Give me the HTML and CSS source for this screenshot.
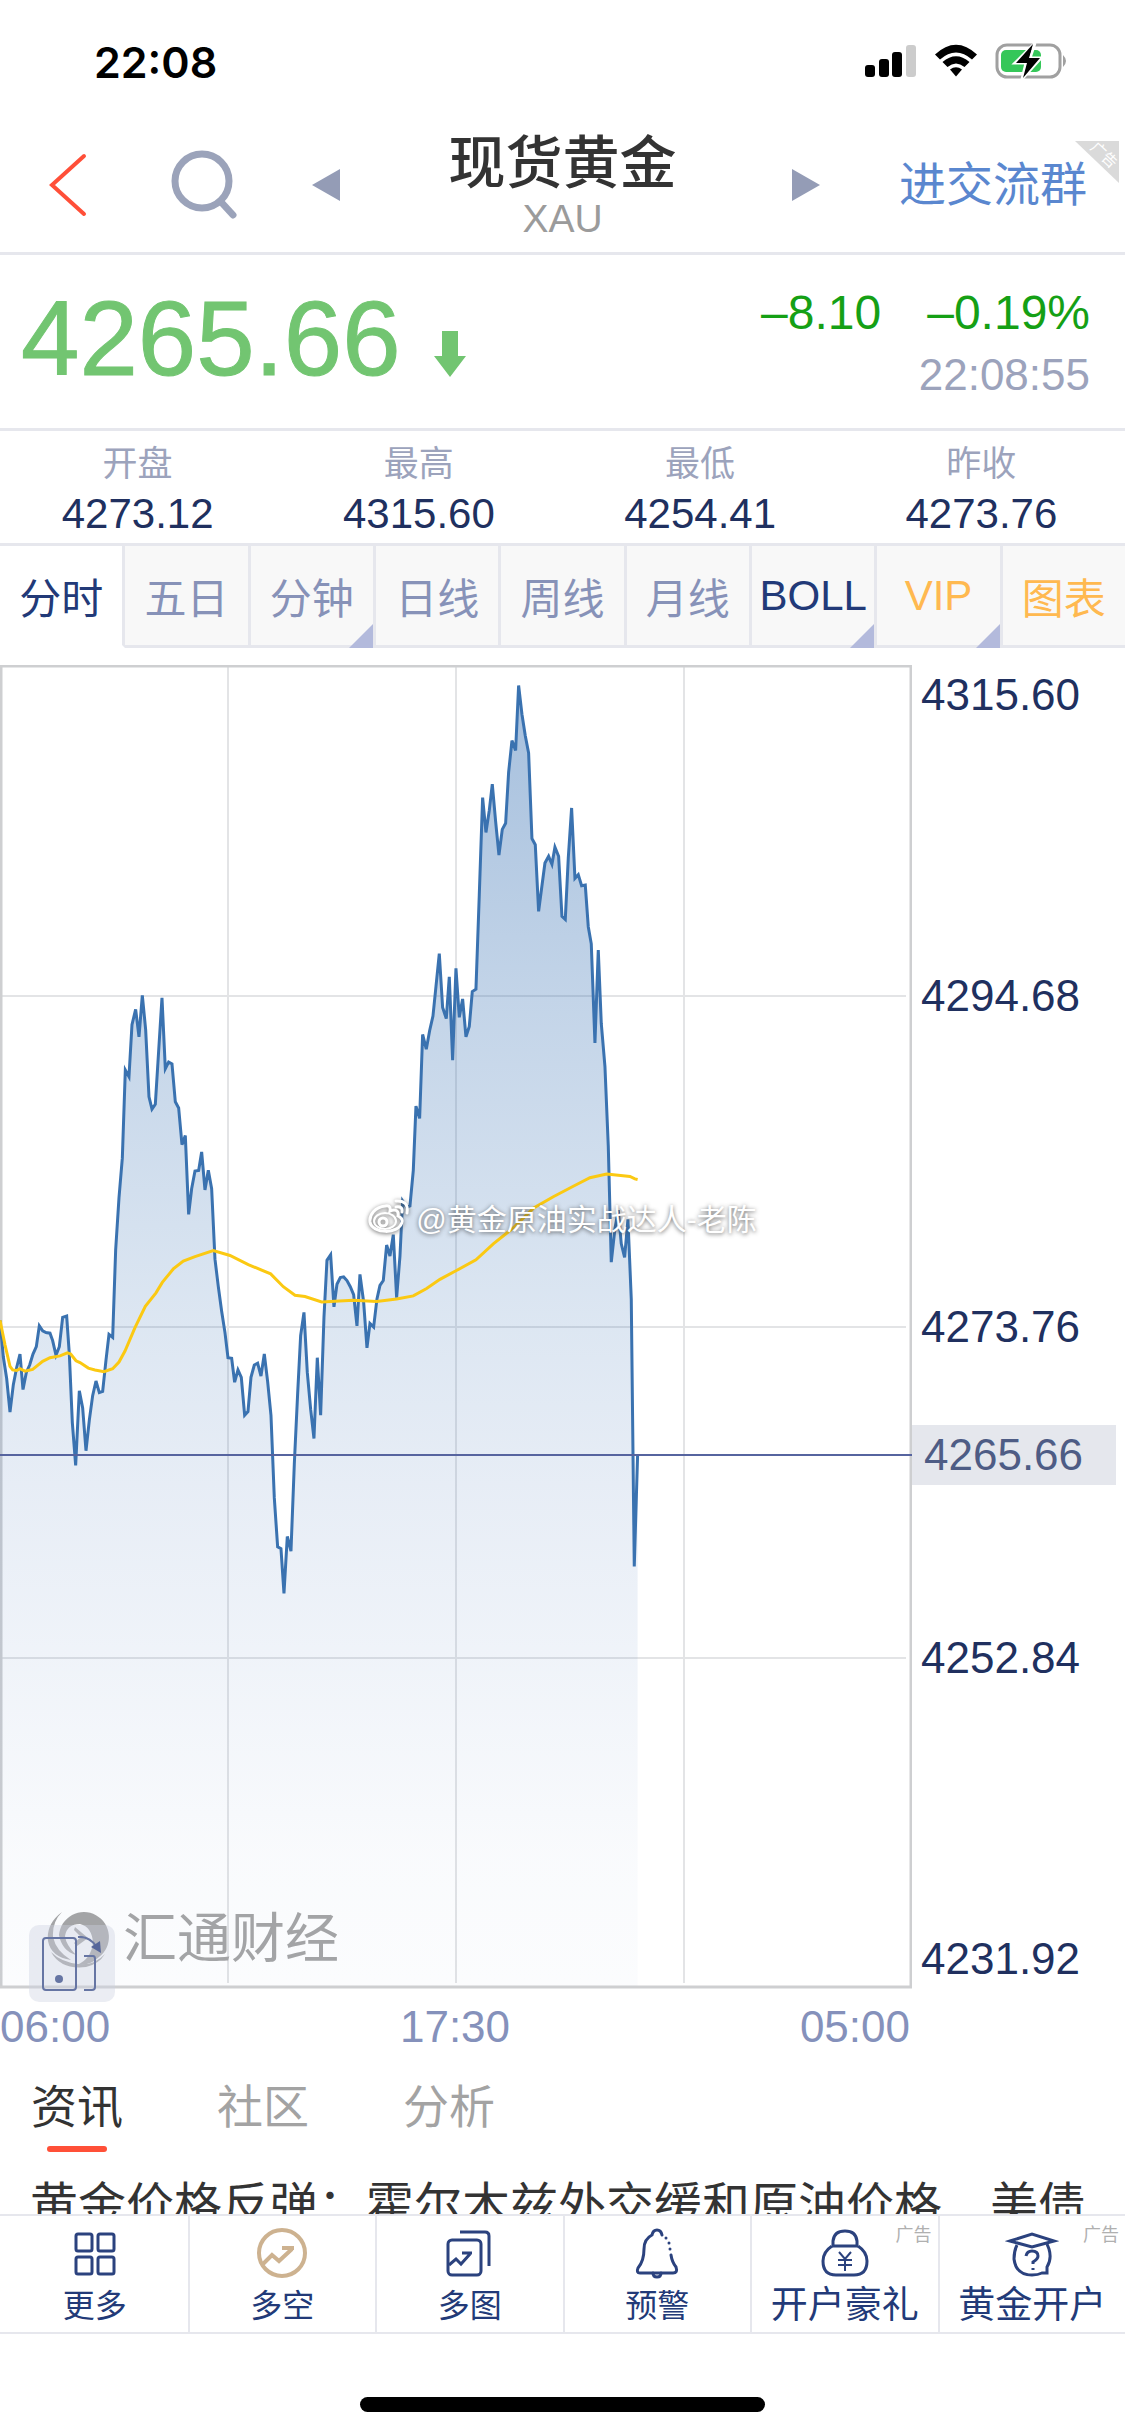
FILE: index.html
```html
<!DOCTYPE html>
<html lang="zh-CN">
<head>
    <meta charset="UTF-8">
    <meta name="viewport" content="width=device-width, initial-scale=1.0">
    <title>现货黄金 XAU</title>
    <link rel="stylesheet" href="styles.css">
</head>
<body>
    <div class="status-bar">
        <span class="clock">22:08</span>
        <div class="status-icons">
            <svg width="52" height="34" viewBox="0 0 52 34">
                <rect x="0" y="21" width="10" height="12" rx="3"/>
                <rect x="14" y="15" width="10" height="18" rx="3"/>
                <rect x="27" y="8" width="10" height="25" rx="3"/>
                <rect x="41" y="1" width="10" height="32" rx="3" fill="#cccccc"/>
            </svg>
            <svg width="44" height="34" viewBox="0 0 44 34">
                <path d="M1 10.500 Q22 -9 43 10.500 L38 15.500 Q22 1.500 6 15.500 Z"/>
                <path d="M8.500 18 Q22 6.500 35.500 18 L30.500 23 Q22 16 13.500 23 Z"/>
                <path d="M16 25.500 Q22 21 28 25.500 L22 32.500 Z"/>
            </svg>
            <svg width="74" height="38" viewBox="0 0 74 38">
                <rect x="2" y="3" width="63" height="32" rx="10" fill="none" stroke="#a0a0a0" stroke-width="3"/>
                <path d="M68 13 Q74 19 68 25 Z" fill="#a0a0a0"/>
                <rect x="6" y="8" width="40" height="22" rx="5" fill="#35c759"/>
                <path d="M40 1 L20 21 L31 21 L27 37 L46 16 L35 16 Z" stroke="#ffffff" stroke-width="3"/>
                <path d="M38 2 L21 21 L32 21 L28 36 L45 16 L34 16 Z"/>
            </svg>
        </div>
    </div>

    <header class="header">
        <div class="header-left">
            <button class="icon-btn" aria-label="返回">
                <svg width="45" height="64" viewBox="0 0 45 64" fill="none" stroke="#ff4f38" stroke-width="4" stroke-linecap="round">
                    <path d="M35 3 L3 32 L35 61"/>
                </svg>
            </button>
            <button class="icon-btn" aria-label="搜索">
                <svg width="68" height="70" viewBox="0 0 68 70" fill="none" stroke="#9ba3ba" stroke-width="7" stroke-linecap="round">
                    <circle cx="33" cy="31" r="27"/>
                    <path d="M53 53 L64 65"/>
                </svg>
            </button>
            <button class="icon-btn" aria-label="上一个">
                <svg width="28" height="32" viewBox="0 0 28 32" fill="#949cb6"><path d="M28 0 V32 L0 16 Z"/></svg>
            </button>
        </div>
        <div class="title">
            <h1>现货黄金</h1>
            <span>XAU</span>
        </div>
        <div class="header-right">
            <button class="icon-btn" aria-label="下一个">
                <svg width="28" height="32" viewBox="0 0 28 32" fill="#949cb6"><path d="M0 0 V32 L28 16 Z"/></svg>
            </button>
            <a class="group-link" href="#">进交流群</a>
        </div>
        <svg class="ribbon" width="44" height="42" viewBox="0 0 44 42">
            <path d="M0 0 H44 V42 Z" fill="#dadada"/>
            <text x="29" y="19" transform="rotate(43 29 14)">广告</text>
        </svg>
    </header>

    <section class="quote">
        <div class="price">
            <strong>4265.66</strong>
            <svg width="32" height="46" viewBox="0 0 32 46" fill="#72c571"><path d="M8 0 H24 V25 H32 L16 46 L0 25 H8 Z"/></svg>
        </div>
        <div class="change">
            <div class="change-values"><span>–8.10</span><span>–0.19%</span></div>
            <time>22:08:55</time>
        </div>
    </section>

    <dl class="stats">
        <div><dt>开盘</dt><dd>4273.12</dd></div>
        <div><dt>最高</dt><dd>4315.60</dd></div>
        <div><dt>最低</dt><dd>4254.41</dd></div>
        <div><dt>昨收</dt><dd>4273.76</dd></div>
    </dl>

    <nav class="periods">
        <button class="active">分时</button>
        <button>五日</button>
        <button class="has-menu">分钟</button>
        <button>日线</button>
        <button>周线</button>
        <button>月线</button>
        <button class="dark has-menu">BOLL</button>
        <button class="gold has-menu">VIP</button>
        <button class="gold">图表</button>
    </nav>

    <main class="content">
        <section class="chart">
            <div class="plot">
                <svg class="plot-svg" viewBox="0 0 912 1324">
                    <defs>
                        <linearGradient id="area-fill" x1="0" y1="0" x2="0" y2="1">
                            <stop offset="0" stop-color="#2f6bb0" stop-opacity="0.43"/>
                            <stop offset="0.24" stop-color="#2f6bb0" stop-opacity="0.29"/>
                            <stop offset="0.49" stop-color="#2f6bb0" stop-opacity="0.165"/>
                            <stop offset="0.62" stop-color="#3a6cb4" stop-opacity="0.12"/>
                            <stop offset="0.9" stop-color="#3a6cb4" stop-opacity="0.03"/>
                            <stop offset="1" stop-color="#3a6cb4" stop-opacity="0.02"/>
                        </linearGradient>
                    </defs>
                    <!-- grid -->
                    <g stroke="#e3e4e6" stroke-width="2">
                        <path d="M228 2 V1318 M456 2 V1318 M684 2 V1318"/>
                        <path d="M2 331 H906 M2 662 H906 M2 993 H906"/>
                    </g>
                    <rect x="1" y="1" width="910" height="1321" fill="none" stroke="#cecfd1" stroke-width="3"/>
                    <!-- price line, area is closed by the script below -->
                    <polygon id="area" fill="url(#area-fill)" transform="translate(0 -15) scale(0.3333 0.6122)"/>
                    <polyline id="price" class="line price-line" transform="translate(0 -15) scale(0.3333 0.6122)" points="
                        0,1095 10,1155 20,1190 30,1245 40,1200 50,1172 60,1150 69,1208 79,1180 89,1168 99,1150 109,1138
                        118,1104 128,1112 138,1115 150,1116 158,1128 168,1152 178,1138 188,1090 200,1088 208,1150 217,1262 227,1332
                        238,1210 248,1238 258,1308 268,1258 278,1218 288,1194 298,1213 308,1211 318,1160 327,1118 338,1123 347,980
                        357,895 367,830 376,686 387,697 396,612 407,587 417,632 427,564 437,620 447,730 456,750 466,742
                        476,655 486,568 496,684 506,673 516,676 526,738 536,748 546,808 556,793 566,922 575,880 585,851
                        596,850 605,820 615,882 625,850 635,880 645,995 655,1040 665,1080 675,1115 684,1156 695,1157 704,1196
                        714,1176 724,1188 734,1250 744,1244 753,1188 763,1168 773,1165 783,1186 793,1150 803,1195 813,1250 823,1385
                        833,1465 843,1468 852,1541 862,1448 873,1472 883,1330 893,1215 902,1120 912,1082 922,1180 932,1240 942,1288
                        952,1156 962,1250 972,1090 981,997 992,988 1002,1073 1011,1036 1021,1025 1031,1024 1041,1030 1051,1040 1061,1053
                        1071,1104 1080,1020 1091,1065 1101,1140 1110,1100 1121,1106 1131,1060 1140,1038 1150,1030 1160,972 1170,990 1180,955
                        1190,1058 1200,990 1208,900 1220,910 1230,908 1240,850 1248,745 1259,765 1268,628 1279,652 1289,622 1299,598
                        1308,550 1318,496 1328,584 1339,602 1348,534 1358,670 1368,520 1378,600 1388,570 1398,632 1408,615 1417,558
                        1428,554 1438,400 1448,241 1458,298 1468,262 1477,219 1487,280 1497,335 1507,293 1517,283 1526,200 1536,148
                        1547,164 1556,58 1566,105 1576,140 1586,168 1596,308 1606,318 1616,427 1626,385 1635,348 1646,337 1656,350
                        1665,322 1676,337 1686,435 1696,440 1705,340 1715,258 1725,373 1735,367 1745,385 1756,384 1765,452 1774,480
                        1785,642 1795,490 1804,610 1815,680 1825,810 1834,1000 1845,945 1855,915 1864,970 1874,992 1884,930 1894,1060
                        1903,1497 1913,1315"/>
                    <!-- average line -->
                    <polyline class="line average-line" transform="translate(0 -15) scale(0.3333 0.6122)" points="
                        0,1095 15,1135 30,1170 38,1176 50,1177 60,1174 75,1178 98,1175 128,1162 150,1156 180,1153 202,1148
                        212,1150 228,1161 240,1164 265,1173 285,1176 312,1179 338,1174 357,1163 375,1145 405,1107 436,1072 468,1050
                        487,1033 520,1011 550,998 585,991 640,981 690,989 745,1004 812,1019 850,1040 885,1054 915,1056 965,1065
                        1060,1062 1130,1064 1190,1060 1240,1055 1280,1043 1320,1028 1368,1014 1428,996 1480,970 1540,944 1600,912 1660,893
                        1720,876 1770,862 1820,856 1890,860 1905,864 1913,865"/>
                    <path d="M0 790 H912" stroke="#56649f" stroke-width="2"/>
                </svg>
                <div class="brand">
                    <svg width="64" height="64" viewBox="0 0 64 64" fill="#a3a4a6">
                        <path fill-rule="evenodd" d="M12 28 A25 25 0 1 1 52 50 Q43 59 30 58 Q44 52 46 36 Q45 20 33 17 Q20 17 18 29 Q19 38 29 48 Q15 44 12 28 Z"/>
                        <path d="M15 5 Q-1 17 1 34 Q4 50 24 53 Q9 44 6 30 Q5 15 15 5 Z"/>
                        <path d="M4 45 Q14 63 39 60 Q52 57 58 47 Q47 59 31 57 Q14 55 4 45 Z"/>
                        <path d="M28 20 L41 31 L30 39 L27 36 L34 30 L27 23 Z"/>
                    </svg>
                    <span>汇通财经</span>
                </div>
                <button class="rotate-btn" aria-label="横屏">
                    <svg width="62" height="56" viewBox="0 0 62 56" fill="none" stroke="#6675a3" stroke-width="2">
                        <rect x="2" y="2" width="33" height="52" rx="3"/>
                        <circle cx="18" cy="43" r="4" fill="#6675a3" stroke="none"/>
                        <path d="M43 20 H52 Q54 20 54 23 V51 Q54 54 51 54 H43"/>
                        <path d="M37 1 Q48 0 55 10"/>
                        <path d="M50 11 L59 5 L60 17 Z" fill="#56669a" stroke="none"/>
                    </svg>
                </button>
            </div>
            <div class="y-axis">
                <span>4315.60</span>
                <span>4294.68</span>
                <span>4273.76</span>
                <span>4252.84</span>
                <span>4231.92</span>
                <span class="last-price" style="top: 59.7%">4265.66</span>
            </div>
            <div class="watermark">
                <svg width="42" height="36" viewBox="0 0 42 36" fill="none" stroke="#ffffff" stroke-width="3">
                    <path d="M17 8 C7 9 1 17 2 24 C4 36 31 37 34 24 C35 20 32 19 30 18 C31 12 27 11 22 13 C23 8 20 7 17 8 Z"/>
                    <ellipse cx="17" cy="23" rx="11" ry="8" stroke-width="2"/>
                    <circle cx="15" cy="24" r="4" stroke-width="3"/>
                    <path d="M28 3 Q41 2 39 15 M28 9 Q35 8 34 14" stroke-linecap="round"/>
                </svg>
                <span>@黄金原油实战达人-老陈</span>
            </div>
        </section>
        <div class="x-axis"><span>06:00</span><span>17:30</span><span>05:00</span></div>

        <div class="feed-tabs">
            <button class="active">资讯</button>
            <button>社区</button>
            <button>分析</button>
        </div>
        <a class="news" href="#">黄金价格反弹：霍尔木兹外交缓和原油价格　美债</a>
    </main>

    <nav class="toolbar">
        <a href="#">
            <svg width="54" height="54" viewBox="0 0 54 54" stroke-width="3">
                <rect x="8" y="8" width="16" height="17" rx="2"/>
                <rect x="30" y="8" width="16" height="17" rx="2"/>
                <rect x="8" y="31" width="16" height="17" rx="2"/>
                <rect x="30" y="31" width="16" height="17" rx="2"/>
            </svg>
            <span>更多</span>
        </a>
        <a class="tan" href="#">
            <svg width="54" height="54" viewBox="0 0 54 54" stroke-width="4">
                <circle cx="27" cy="27" r="23"/>
                <path d="M8 38 L17 29 L24 35 L37 23 M27 22 H39"/>
            </svg>
            <span>多空</span>
        </a>
        <a href="#">
            <svg width="54" height="54" viewBox="0 0 54 54" stroke-width="3">
                <rect x="5" y="14" width="33" height="35" rx="4"/>
                <path d="M17 6 H42 Q46 6 46 10 V40"/>
                <path d="M6 39 L13 33 L18 38 L27 28 M19 27 H29"/>
            </svg>
            <span>多图</span>
        </a>
        <a href="#">
            <svg width="54" height="54" viewBox="0 0 54 54" stroke-width="3" stroke-linecap="round">
                <path d="M32 9 Q31 4 27 4 Q23 4 22 9 Q14 13 14 23 Q14 35 8 42 Q6 47 10 47 H43 Q48 47 46 41 Q42 36 41 29"/>
                <path d="M36 12 V12 M39 17 V17 M40 23 V23"/>
                <path d="M23 47 Q23 51 27 51 Q31 51 31 47"/>
            </svg>
            <span>预警</span>
        </a>
        <a class="promo" href="#">
            <svg width="54" height="54" viewBox="0 0 54 54" stroke-width="3">
                <path d="M15 19 V15 Q16 5 27 5 Q38 5 39 15 V19 M14 20 H40"/>
                <path d="M14 20 Q5 26 5 35 Q5 49 18 49 H36 Q49 49 49 35 Q49 26 40 20"/>
                <path d="M21 26 L27 33 L33 26 M27 33 V45 M20 34 H34 M20 39 H34" stroke-width="2"/>
            </svg>
            <span>开户豪礼</span>
            <small>广告</small>
        </a>
        <a class="promo" href="#">
            <svg width="54" height="54" viewBox="0 0 54 54" stroke-width="3">
                <path d="M5 15 L27 8 L49 15 L27 21 Z"/>
                <path d="M12 19 Q9 25 9 33 Q11 49 27 49 Q33 49 37 47 H42 V41 Q47 33 44 23 L42 18"/>
                <path d="M21 30 Q22 25 27 25 Q33 25 33 30 Q33 33 28 36 V38 M28 42 V44"/>
            </svg>
            <span>黄金开户</span>
            <small>广告</small>
        </a>
    </nav>
    <div class="home-area"><div class="home-indicator"></div></div>

    <script>
        // close the price line down to the bottom of the plot
        const points = document.getElementById("price").getAttribute("points").trim();
        document.getElementById("area").setAttribute("points", "0,2182 " + points + " 1913,2182");
    </script>
</body>
</html>
```
FILE: styles.css
```css
* {
    box-sizing: border-box;
}

body {
    margin: 0;
    height: 100vh;
    display: flex;
    flex-direction: column;
    overflow: hidden;
    background-color: #ffffff;
    font-family: "Liberation Sans", "Noto Sans CJK SC", sans-serif;
    color: #20305f;
}

button {
    border: 0;
    padding: 0;
    background: none;
    font: inherit;
    color: inherit;
}

a {
    color: inherit;
    text-decoration: none;
}

svg {
    display: block;
}

/* Status bar */
.status-bar {
    flex: none;
    height: 108px;
    padding: 14px 56px 0 94px;
    display: flex;
    justify-content: space-between;
    color: #000000;
}

.clock {
    font-family: "Inter", sans-serif;
    font-size: 43px;
    font-weight: 600;
    line-height: 96px;
}

.status-icons {
    display: flex;
    align-items: center;
    gap: 17px;
    height: 94px;
}

/* Header */
.header {
    flex: none;
    position: relative;
    height: 147px;
    padding-top: 10px;
    display: grid;
    grid-template-columns: 1fr auto 1fr;
    align-items: center;
    border-bottom: 3px solid #e6e7ed;
}

.header-left {
    display: flex;
    align-items: center;
    gap: 75px;
    padding-left: 49px;
}

.header-right {
    display: flex;
    align-items: center;
    justify-content: space-between;
    padding: 0 38px 0 115px;
}

.title {
    text-align: center;
}

.title h1 {
    margin: 0;
    font-size: 57px;
    font-weight: 500;
    line-height: 68px;
    color: #333333;
}

.title span {
    display: block;
    font-size: 39px;
    line-height: 44px;
    color: #9b9b9b;
}

.group-link {
    font-size: 47px;
    line-height: 60px;
    color: #5a87cf;
}

.ribbon {
    position: absolute;
    top: 33px;
    right: 6px;
}

.ribbon text {
    font-size: 15px;
    text-anchor: middle;
    fill: #ffffff;
}

/* Quote */
.quote {
    flex: none;
    height: 176px;
    padding: 0 35px 0 21px;
    display: flex;
    justify-content: space-between;
    border-bottom: 3px solid #e6e7ed;
}

.price {
    display: flex;
    align-items: flex-end;
    gap: 33px;
    padding-bottom: 51px;
}

.price strong {
    font-size: 105px;
    font-weight: 400;
    line-height: 76px;
    color: #72c571;
    -webkit-text-stroke: 1px #72c571;
}

.change {
    padding-top: 28px;
    text-align: right;
}

.change-values {
    display: flex;
    gap: 46px;
    font-size: 48px;
    line-height: 60px;
    color: #15a015;
}

.change time {
    display: block;
    margin-top: 2px;
    font-size: 44px;
    line-height: 60px;
    color: #9ca3bc;
}

/* Open, high, low, close */
.stats {
    flex: none;
    height: 115px;
    margin: 0 0 0 -3px;
    padding: 11px 3px 0 0;
    display: flex;
    border-bottom: 3px solid #e6e7ed;
    text-align: center;
}

.stats div {
    flex: 1;
}

.stats dt {
    font-size: 35px;
    line-height: 44px;
    color: #9ca3bc;
}

.stats dd {
    margin: 4px 0 0;
    font-size: 42px;
    line-height: 48px;
}

/* Period tabs */
.periods {
    flex: none;
    height: 102px;
    margin-right: -3px;
    display: grid;
    grid-template-columns: repeat(9, 1fr);
}

.periods button {
    position: relative;
    border-right: 3px solid #e6e7ed;
    border-bottom: 3px solid #e6e7ed;
    background-color: #f8f8f8;
    font-size: 42px;
    color: #8792b8;
}

.periods .active {
    border-bottom-color: #ffffff;
    background-color: #ffffff;
    color: #223a78;
}

.periods .dark {
    color: #223a78;
}

.periods .gold {
    color: #ffb950;
}

.has-menu::after {
    content: "";
    position: absolute;
    right: 0;
    bottom: -3px;
    border-left: 24px solid transparent;
    border-bottom: 24px solid #b3badc;
}

/* Chart */
.content {
    flex: 1;
    min-height: 0;
    overflow: hidden;
    padding-top: 17px;
}

.chart {
    position: relative;
    display: grid;
    grid-template-columns: 1fr 213px;
}

.plot {
    position: relative;
}

.plot-svg {
    width: 100%;
    height: auto;
}

.line {
    fill: none;
    stroke-width: 3px;
    vector-effect: non-scaling-stroke;
}

.price-line {
    stroke: #3a72b0;
}

.average-line {
    stroke: #fbc912;
}

.brand {
    position: absolute;
    left: 47px;
    bottom: 13px;
    display: flex;
    align-items: center;
    gap: 12px;
    font-size: 54px;
    line-height: 74px;
    color: #a3a4a6;
}

.rotate-btn {
    position: absolute;
    left: 29px;
    bottom: -13px;
    padding: 11px 12px 10px;
    border-radius: 10px;
    background-color: rgba(205, 209, 226, 0.4);
}

.y-axis {
    position: relative;
    display: grid;
    grid-template-rows: 1fr 2fr 2fr 2fr 1fr;
    align-items: center;
    padding-left: 9px;
    font-size: 44px;
    line-height: 60px;
}

.y-axis span:first-child {
    align-self: start;
}

.y-axis span:nth-child(5) {
    align-self: end;
}

.last-price {
    position: absolute;
    left: 0;
    right: 9px;
    padding-left: 12px;
    background-color: #e5e7ed;
    color: #4e5c85;
    transform: translateY(-50%);
}

.watermark {
    position: absolute;
    top: 533px;
    left: 0;
    right: 0;
    display: flex;
    justify-content: center;
    gap: 6px;
    font-size: 30px;
    line-height: 44px;
    color: #ffffff;
    text-shadow: 0 1px 4px rgba(60, 60, 60, 0.8);
}

.watermark svg {
    filter: drop-shadow(0 1px 2px rgba(60, 60, 60, 0.7));
}

.x-axis {
    display: flex;
    justify-content: space-between;
    padding: 8px 215px 0 0;
    font-size: 44px;
    line-height: 60px;
    color: #8591bb;
}

/* News */
.feed-tabs {
    display: flex;
    gap: 94px;
    padding: 20px 31px 0;
    font-size: 46px;
    line-height: 60px;
    color: #a3a3a3;
}

.feed-tabs button {
    padding-bottom: 15px;
    position: relative;
}

.feed-tabs .active {
    color: #333333;
}

.feed-tabs .active::after {
    content: "";
    position: absolute;
    left: 16px;
    right: 16px;
    bottom: 0;
    height: 6px;
    border-radius: 3px;
    background-color: #ff5038;
}

.news {
    display: block;
    margin-top: 20px;
    padding: 0 30px;
    font-size: 48px;
    line-height: 68px;
    white-space: nowrap;
    color: #333333;
}

/* Bottom toolbar */
.toolbar {
    flex: none;
    height: 120px;
    display: grid;
    grid-template-columns: repeat(6, 1fr);
    border-top: 2px solid #e6e7ed;
    border-bottom: 2px solid #e6e7ed;
}

.toolbar a {
    position: relative;
    display: flex;
    flex-direction: column;
    align-items: center;
    padding-top: 10px;
    border-left: 2px solid #e6e7ed;
    font-size: 32px;
    line-height: 52px;
    color: #223a78;
}

.toolbar a:first-child {
    border-left-color: #ffffff;
}

.toolbar .promo {
    font-size: 37px;
}

.toolbar svg {
    flex: none;
    fill: none;
    stroke: #2b427e;
}

.toolbar .tan svg {
    stroke: #cdb290;
}

.toolbar small {
    position: absolute;
    top: 7px;
    right: 6px;
    font-size: 18px;
    line-height: 24px;
    color: #b0b0b0;
}

.home-area {
    flex: none;
    height: 102px;
    padding-top: 63px;
}

.home-indicator {
    width: 36%;
    height: 15px;
    margin: 0 auto;
    border-radius: 8px;
    background-color: #000000;
}
```
